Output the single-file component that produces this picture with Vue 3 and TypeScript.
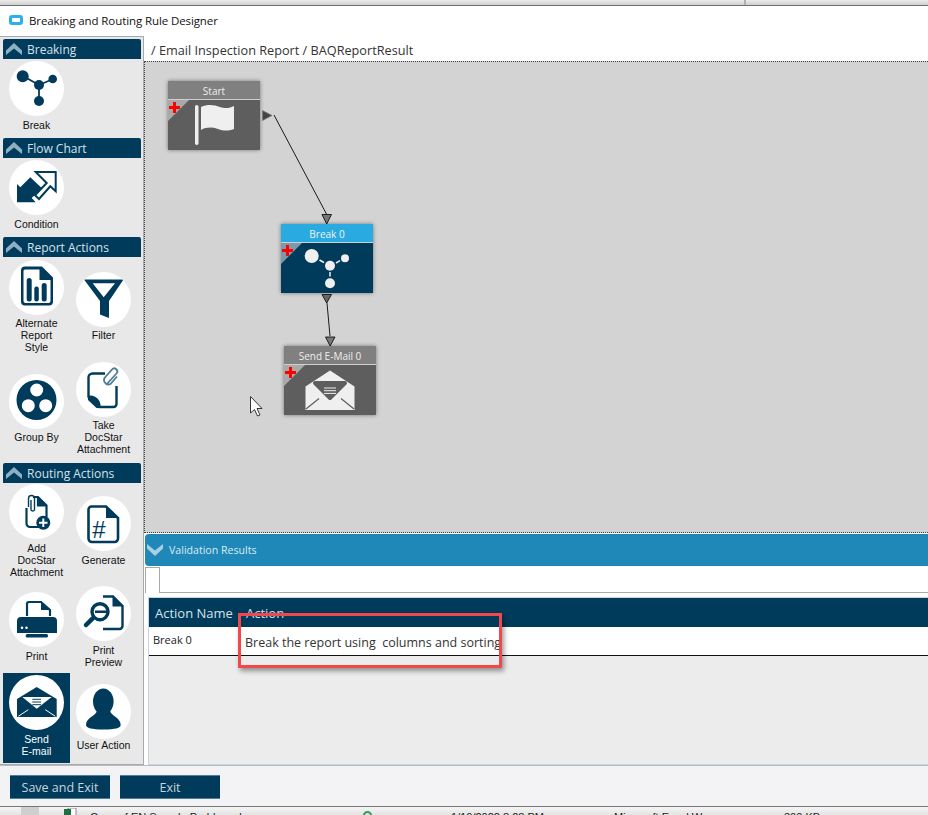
<script setup lang="ts">
interface Tile { name: string[]; icon: string; cls?: string }
interface Section { title: string; cls: string; tiles: Tile[] }

const breakIcon = `<g stroke="currentColor" stroke-width="1.8"><path d="M14 15L30 24M44 18L30 24M30 24V40"/></g><circle cx="13.7" cy="15.3" r="6"/><circle cx="30" cy="24" r="5"/><circle cx="43.7" cy="18" r="4.3"/><circle cx="30" cy="40" r="5"/>`

const icons: Record<string, string> = {
  break: breakIcon,
  condition: `<path d="M8 24L11.300 27.300L21.300 17.300L32.700 28L22.700 38L26.700 42.300H8Z"/><path d="M26.700 12H46.700V31.300L41.300 26.300L30 39L26 35.300L37.700 23Z" fill="none" stroke="currentColor" stroke-width="2"/>`,
  report: `<path fill-rule="evenodd" d="M16 6.500H33L44 17.500V41.500A4 4 0 0 1 40 45.500H16A4 4 0 0 1 12 41.500V10.500A4 4 0 0 1 16 6.500ZM16 9.500A1.500 1.500 0 0 0 14.500 11V41A2 2 0 0 0 16.500 43H39.500A2 2 0 0 0 41.500 41V20H30.500V9.500Z"/><rect x="17.700" y="18" width="5" height="23.500" rx="2.500"/><rect x="25.300" y="26.500" width="4.500" height="15" rx="2.200"/><rect x="32.700" y="23" width="5" height="18.500" rx="2.500"/>`,
  filter: `<path fill-rule="evenodd" d="M8 7.500H47.500L33 29V46L24 42.500V29ZM16.700 11.300L27.700 25.300L39 11.300Z"/>`,
  group: `<path fill-rule="evenodd" d="M27.500 6A20 20 0 1 0 27.500 46A20 20 0 1 0 27.500 6ZM27.700 9.500A6.500 6.500 0 1 1 27.700 22.500A6.500 6.500 0 1 1 27.700 9.500ZM19.300 25.200A6.500 6.500 0 1 1 19.300 38.200A6.500 6.500 0 1 1 19.300 25.200ZM36.700 25.200A6.500 6.500 0 1 1 36.700 38.200A6.500 6.500 0 1 1 36.700 25.200Z"/>`,
  take: `<path d="M29 11.500H16.500A4 4 0 0 0 12.500 15.500V34.500C19 34.500 23.500 38 23.500 45H37.500A3 3 0 0 0 40.500 42V24" fill="none" stroke="currentColor" stroke-width="2.400"/><path d="M12 34.500V38L20.500 46H24C24 39 19 34.500 12 34.500Z"/><path d="M30 23L40.500 11.500A3 3 0 0 0 36 7.500L28.500 16A4.500 4.500 0 0 0 34.500 22L41 14.500" fill="none" stroke="#4f7d98" stroke-width="1.800"/>`,
  add: `<path d="M24 13H29L37.500 21.500V33M29 13V21.500H37.500M30 43H21A3.500 3.500 0 0 1 17.500 39.500V24" fill="none" stroke="currentColor" stroke-width="2.200"/><path d="M29 12.500L38 21.500H29Z"/><path d="M19.500 23V14.500A3 3 0 0 1 25.500 14.500V26A2 2 0 0 1 22 26V16" fill="none" stroke="currentColor" stroke-width="1.400"/><circle cx="34.300" cy="38.700" r="7"/><path d="M34.300 34.500V43M30 38.700H38.500" stroke="#fff" stroke-width="2"/>`,
  generate: `<path d="M15.500 10.500H30L42 22V42.500A3.500 3.500 0 0 1 38.500 46H16A3.500 3.500 0 0 1 12.500 42.500V13.500A3 3 0 0 1 15.500 10.500Z" fill="none" stroke="currentColor" stroke-width="2.600"/><path d="M30 9.500L43 22H30Z"/><text x="23" y="42" font-family="Liberation Sans" font-size="24" text-anchor="middle">#</text>`,
  print: `<path d="M18 24V12A2 2 0 0 1 20 10H32L41 18V24" fill="none" stroke="currentColor" stroke-width="2.200"/><path d="M32 9.500L41.500 18H32Z"/><path fill-rule="evenodd" d="M12 25H44A4 4 0 0 1 48 29V41H8V29A4 4 0 0 1 12 25ZM13 34.500A1.300 1.300 0 1 0 13 37.100A1.300 1.300 0 1 0 13 34.500ZM17.500 34.500A1.300 1.300 0 1 0 17.500 37.100A1.300 1.300 0 1 0 17.500 34.500Z"/><rect x="16.700" y="42" width="22.300" height="3.500" rx="1.500"/>`,
  preview: `<path d="M27 10.500H37L46.500 20V40A3 3 0 0 1 43.500 43H27" fill="none" stroke="currentColor" stroke-width="2.400"/><path d="M36.500 9.500L47.500 20.500H36.500Z"/><circle cx="24" cy="25.700" r="8" fill="#fff" stroke="currentColor" stroke-width="3.400"/><path d="M16.700 32.300L10 39" stroke="currentColor" stroke-width="4.500" stroke-linecap="round"/><path d="M19 25.700H30.700" stroke="currentColor" stroke-width="2.600"/>`,
  mail: `<path d="M8 24L27.700 12L47.700 24V42H8Z"/><path d="M13.300 22H42.700L27.700 33.700Z" fill="#fff"/><path d="M23.300 24.300H32M23.300 27H32M23.300 29.700H32" stroke="currentColor" stroke-width="1"/><path d="M9.300 41.300L19.300 34.700M46.300 41.300L36.300 34.700" stroke="#fff" stroke-width="1"/>`,
  user: `<ellipse cx="27.300" cy="17.500" rx="10.300" ry="13"/><path d="M21 26C21 32 10 33 10 41C10 44 16 45.500 27.500 45.500C39 45.500 44.700 44 44.700 41C44.700 33 34 32 34 26Z"/>`,
}

const sections: Section[] = [
  { title: 'Breaking', cls: 'single', tiles: [{ name: ['Break'], icon: 'break' }] },
  { title: 'Flow Chart', cls: 'single', tiles: [{ name: ['Condition'], icon: 'condition' }] },
  {
    title: 'Report Actions', cls: 'report', tiles: [
      { name: ['Alternate', 'Report', 'Style'], icon: 'report' },
      { name: ['Filter'], icon: 'filter' },
      { name: ['Group By'], icon: 'group' },
      { name: ['Take', 'DocStar', 'Attachment'], icon: 'take' },
    ],
  },
  {
    title: 'Routing Actions', cls: 'routing', tiles: [
      { name: ['Add', 'DocStar', 'Attachment'], icon: 'add', cls: 'lift' },
      { name: ['Generate'], icon: 'generate', cls: 'lift' },
      { name: ['Print'], icon: 'print' },
      { name: ['Print', 'Preview'], icon: 'preview' },
      { name: ['Send', 'E-mail'], icon: 'mail', cls: 'selected' },
      { name: ['User Action'], icon: 'user', cls: 'tight' },
    ],
  },
]

interface FlowNode { title: string; cls: string; svg: string }
const white = '#efefef'
const nodes: FlowNode[] = [
  {
    title: 'Start', cls: 'n-start',
    svg: `<rect x="27" y="5" width="3.500" height="40" rx="1.700" fill="${white}"/><path d="M33 7C40 4 46 5 52 7C58 9 62 8 66 6V29C60 31 56 31 50 29C44 27 38 27 33 30Z" fill="${white}"/>`,
  },
  {
    title: 'Break 0', cls: 'n-break',
    svg: `<g fill="${white}"><circle cx="30.700" cy="13" r="7"/><circle cx="49" cy="22.700" r="5"/><circle cx="64" cy="15.300" r="4"/><circle cx="49" cy="40.300" r="5"/></g><path d="M38.500 17L43 19.500M55 20L59 17.700M49 29V33.500" stroke="${white}" stroke-width="1.500"/>`,
  },
  {
    title: 'Send E-Mail 0', cls: 'n-mail',
    svg: `<path d="M21.500 21.500L46 5.500L70.500 21.500V45H21.500Z" fill="${white}"/><path d="M31 18H61L46 33Z" fill="#5e5e5e" stroke="#5e5e5e" stroke-width="4" stroke-linejoin="round"/><path d="M40 23H52M40 25.700H52M40 28.400H52" stroke="${white}" stroke-width="1"/><path d="M22 44L35 33.500M70 44L57 33.500" stroke="#5e5e5e" stroke-width="1.200"/>`,
  },
]
</script>

<template>
  <div class="window">
    <div class="top-strip">
      <div class="strip-left"></div>
      <div class="strip-right"></div>
    </div>
    <header class="title-bar">
      <span class="app-icon"></span>
      <span class="title-text">Breaking and Routing Rule Designer</span>
    </header>

    <div class="body">
      <aside class="sidebar">
        <section v-for="s in sections" :key="s.title" class="group">
          <div class="group-head">
            <svg class="chev" viewBox="0 0 16 12" width="16" height="12"><path d="M8 0L16 7.500V12L8 5.500L0 12V7.500Z" /></svg>
            <span>{{ s.title }}</span>
          </div>
          <div class="tiles" :class="s.cls">
            <div v-for="t in s.tiles" :key="t.icon" class="tile" :class="t.cls">
              <svg class="disc" viewBox="0 0 55 55" width="55" height="55" v-html="icons[t.icon]"></svg>
              <div class="tile-label">
                <div v-for="line in t.name" :key="line">{{ line }}</div>
              </div>
            </div>
          </div>
        </section>
      </aside>

      <main class="main">
        <div class="crumb">/ Email Inspection Report / BAQReportResult</div>
        <div class="canvas">
          <div v-for="n in nodes" :key="n.title" class="node" :class="n.cls">
            <div class="node-head">{{ n.title }}</div>
            <div class="node-body">
              <span class="corner"></span>
              <span class="plus"></span>
              <svg viewBox="0 0 92 49" width="92" height="49" v-html="n.svg"></svg>
            </div>
          </div>
          <svg class="wires" width="784" height="470" viewBox="0 0 784 470">
            <g transform="translate(-145 -62)">
              <path d="M274 115L327 215M327 303L330 336" stroke="#1a1a1a" stroke-width="1" fill="none"/>
              <path d="M262.500 110.500L272 115.500L262.500 120.500Z" fill="#444" stroke="#777" stroke-width="0.800"/>
              <path d="M322 214.500H331.500L326.700 224Z" fill="#777" stroke="#111" stroke-width="0.900"/>
              <path d="M322 294.500H331.500L326.700 303Z" fill="#666" stroke="#111" stroke-width="0.900"/>
              <path d="M325.500 337H335L330.200 346Z" fill="#777" stroke="#111" stroke-width="0.900"/>
              <path d="M250.500 396.500V413L254.500 409.500L257.500 416L260 415L257 408.500H262Z" fill="#fff" stroke="#222" stroke-width="0.900"/>
            </g>
          </svg>
        </div>

        <div class="validation">
          <div class="v-bar">
            <svg class="chev-down" viewBox="0 0 16 12" width="16" height="14"><path d="M8 12L16 4.500V0L8 6.500L0 0V4.500Z" /></svg>
            <span>Validation Results</span>
          </div>
          <div class="tabs">
            <span class="tab"></span>
            <span class="tab-rest"></span>
          </div>
          <div class="grid">
            <div class="grid-head">
              <span class="col-a">Action Name</span>
              <span>Action</span>
            </div>
            <div class="grid-row">
              <span class="col-a cell-a">Break 0</span>
              <span class="cell-b">Break the report using&nbsp; columns and sorting</span>
            </div>
            <div class="highlight"></div>
          </div>
        </div>
      </main>
    </div>

    <footer class="footer">
      <button class="btn">Save and Exit</button>
      <button class="btn">Exit</button>
    </footer>
    <div class="taskbar">
      <span class="tb-block"></span>
      <svg class="tb-xl" width="13" height="10" viewBox="0 0 13 10"><rect x="4" y="0" width="8" height="10" fill="#fff" stroke="#888"/><rect x="0" y="1" width="7" height="9" fill="#1d7044"/></svg>
      <span class="tb-file">Copy of EN Sample Problem.xlsx</span>
      <span class="tb-dot"></span>
      <span class="tb-date">1/10/2022 8:28 PM</span>
      <span class="tb-type">Microsoft Excel W</span>
      <span class="tb-size">300 KB</span>
    </div>
  </div>
</template>

<style>
html, body { margin: 0; background: #fff; }
</style>

<style scoped>
.window {
  width: 928px;
  height: 815px;
  overflow: hidden;
  display: flex;
  flex-direction: column;
  font-family: "Open Sans", "Noto Sans", sans-serif;
  background: #fff;
}
.top-strip {
  height: 5px;
  flex: none;
  display: flex;
  border-bottom: 1px solid #707070;
  background: linear-gradient(#ececec, #cfcfcf);
}
.strip-left { width: 744px; border-right: 2px solid #b0b0b0; }
.strip-right { flex: 1; }
.title-bar {
  height: 30px;
  flex: none;
  display: flex;
  align-items: center;
  padding: 0 0 2px 9px;
  gap: 6px;
  box-sizing: border-box;
}
.app-icon {
  width: 14px;
  height: 10px;
  box-sizing: border-box;
  border: 3px solid #2ab0ea;
  border-radius: 3px;
}
.title-text { font-size: 11.5px; color: #111; letter-spacing: -0.1px; }
.body { height: 729px; flex: none; display: flex; }
.sidebar {
  width: 144px;
  flex: none;
  box-sizing: border-box;
  padding: 2px 2px 0 3px;
  background: #e8e8e8;
  border: 1px solid #a8a8b0;
  border-left-width: 0;
}
.group-head {
  width: 138px;
  height: 20px;
  box-sizing: border-box;
  background: #003b5c;
  border-radius: 2px 2px 0 0;
  display: flex;
  align-items: center;
  gap: 5px;
  padding-left: 3px;
  color: #d6e2ea;
  font-size: 12px;
}
.chev { fill: #8fb0c2; flex: none; }
.tiles { display: grid; grid-template-columns: 67px 67px; }
.tiles.single { grid-template-rows: 79px; }
.tiles.report { grid-template-rows: 99px 104px; padding-bottom: 3px; }
.tiles.routing { grid-template-rows: 97px 93px 90px; }
.tile {
  display: flex;
  flex-direction: column;
  align-items: center;
  justify-content: center;
  gap: 2px;
  color: #111;
  box-sizing: border-box;
}
.routing .tile { gap: 3px; }
.single .tile { justify-content: flex-start; padding-top: 2px; gap: 3px; }
.tile.lift { padding-bottom: 2px; }
.tile.selected { background: #003b5c; color: #fff; padding-bottom: 5px; }
.routing .tile.tight { gap: 0; padding-bottom: 2px; }
.disc {
  flex: none;
  border-radius: 50%;
  background: #fff;
  color: #003b5c;
  fill: #003b5c;
}
.tile-label {
  font-family: "Liberation Sans", Arial, sans-serif;
  font-size: 10.5px;
  line-height: 12px;
  text-align: center;
  white-space: nowrap;
}
.main { flex: 1; min-width: 0; display: flex; flex-direction: column; }
.crumb {
  height: 25px;
  flex: none;
  box-sizing: border-box;
  padding: 5px 0 0 7px;
  font-size: 12.7px;
  line-height: 18px;
  color: #333;
}
.canvas {
  height: 472px;
  flex: none;
  position: relative;
  box-sizing: border-box;
  background: #d3d3d3;
  border: 1px dotted #444;
  border-right: 0;
  overflow: hidden;
}
.wires { position: absolute; left: 0; top: 0; }
.node {
  position: absolute;
  width: 92px;
  height: 69px;
  box-shadow: 0 0 4px rgba(0, 0, 0, 0.45);
  display: flex;
  flex-direction: column;
}
.n-start { left: 23px; top: 19px; }
.n-break { left: 136px; top: 162px; }
.n-mail { left: 139px; top: 284px; }
.node-head {
  height: 19px;
  flex: none;
  box-sizing: border-box;
  border-bottom: 1px solid #cfcfcf;
  background: #808080;
  color: #eee;
  font-size: 10px;
  line-height: 20px;
  text-align: center;
}
.node-body {
  flex: 1;
  position: relative;
  background: #5e5e5e;
  overflow: hidden;
}
.node-body svg { position: absolute; left: 0; top: 0; }
.n-break .node-head { background: #29abe2; color: #f2f2f2; }
.n-break .node-body { background: #003b5c; }
.corner {
  position: absolute;
  left: 0;
  top: 0;
  width: 0;
  height: 0;
  border-top: 21px solid #a9a9a9;
  border-right: 21px solid transparent;
}
.n-break .corner { border-top-color: #7d99aa; }
.plus {
  position: absolute;
  left: 1px;
  top: 2px;
  width: 11px;
  height: 11px;
  background:
    linear-gradient(#f00, #f00) center / 11px 3px no-repeat,
    linear-gradient(#f00, #f00) center / 3px 11px no-repeat;
}
.validation {
  flex: 1;
  display: flex;
  flex-direction: column;
  padding: 1px 0 0 1px;
  background: #fff;
}
.v-bar {
  height: 32px;
  flex: none;
  display: flex;
  align-items: center;
  gap: 6px;
  padding-left: 2px;
  background: #1f88b8;
  border-radius: 4px 0 0 4px;
  color: #d9ebf3;
  font-size: 10.6px;
}
.chev-down { fill: #a6d0e3; }
.tabs { height: 27px; flex: none; display: flex; }
.tab {
  width: 15px;
  box-sizing: border-box;
  margin-top: 1px;
  border-top: 1px solid #aaa;
  border-right: 1px solid #aaa;
  border-left: 1px solid #aaa;
}
.tab-rest { flex: 1; border-bottom: 1px solid #aaa; }
.grid {
  flex: 1;
  position: relative;
  margin: 4px 0 0 3px;
  border: 1px solid #c6d2e6;
  border-right: 0;
  background: #ececec;
  display: flex;
  flex-direction: column;
}
.grid-head {
  height: 29px;
  flex: none;
  background: #003b5c;
  color: #d6e2ea;
  font-size: 13px;
  display: flex;
  align-items: center;
}
.col-a { width: 91px; padding-left: 6px; flex: none; }
.grid-row {
  height: 29px;
  flex: none;
  box-sizing: border-box;
  background: #fff;
  border-bottom: 1px solid #111;
  display: flex;
  align-items: center;
  padding-bottom: 3px;
  white-space: nowrap;
}
.cell-a { padding-left: 4px; width: 92px; font-size: 11px; color: #222; }
.cell-b {
  width: 255px;
  overflow: hidden;
  font-size: 12.5px;
  color: #333;
  padding-top: 5px;
}
.highlight {
  position: absolute;
  left: 89px;
  top: 15px;
  width: 264px;
  height: 55px;
  box-sizing: border-box;
  border: 3px solid #f2484b;
  box-shadow: 2px 3px 5px rgba(0, 0, 0, 0.4);
}
.footer {
  height: 42px;
  flex: none;
  box-sizing: border-box;
  display: flex;
  gap: 10px;
  padding: 9px 0 0 10px;
  background: #f3f3f5;
  border-top: 1px solid #bbb;
  border-bottom: 1px solid #777;
}
.btn {
  width: 100px;
  height: 24px;
  padding: 0;
  background: #003b5c;
  border: 0;
  border-top: 1px solid #4f7d98;
  border-bottom: 1px solid #4f7d98;
  color: #c8d4dc;
  font-family: "Open Sans", "Noto Sans", sans-serif;
  font-size: 12.5px;
}
.taskbar {
  flex: 1;
  display: flex;
  overflow: hidden;
  background: linear-gradient(#f5f5f5, #e4e4e4);
  font-family: "Liberation Sans", Arial, sans-serif;
  font-size: 11px;
  line-height: 14px;
  color: #222;
  padding-top: 3px;
  white-space: nowrap;
}
.tb-block { width: 18px; height: 20px; flex: none; margin: -3px 0 0 21px; background: #cfcfcf; }
.tb-xl { flex: none; margin: -2px 0 0 25px; }
.tb-file { margin-left: 13px; width: 273px; flex: none; }
.tb-dot { width: 9px; height: 9px; flex: none; margin-top: 1px; border-radius: 50%; border: 2px solid #2f9e5b; box-sizing: border-box; }
.tb-date { margin-left: 79px; width: 163px; flex: none; }
.tb-type { width: 170px; flex: none; }
</style>
